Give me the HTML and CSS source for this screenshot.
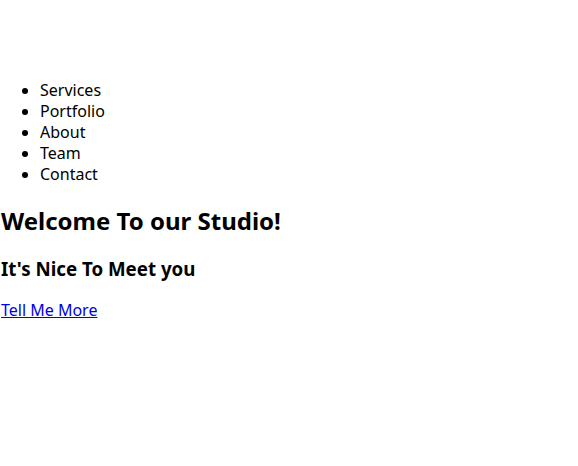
FILE: index.html
```html
<!DOCTYPE html>
<html lang="en">
<head>
<meta charset="utf-8">
<title>Studio</title>
<link rel="stylesheet" href="styles.css">
</head>
<body>
<nav class="nav">
  <ul class="nav-list">
    <li>Services</li>
    <li>Portfolio</li>
    <li>About</li>
    <li>Team</li>
    <li>Contact</li>
  </ul>
</nav>
<header class="hero">
  <h1 class="hero-title">Welcome To our Studio!</h1>
  <h3 class="hero-sub">It's Nice To Meet you</h3>
  <a class="hero-link" href="#">Tell Me More</a>
</header>
</body>
</html>
```

FILE: styles.css
```css
body {
  margin: 0;
  font-family: "Noto Sans", "Open Sans", sans-serif;
  font-size: 16px;
  line-height: 21px;
  color: #000;
  background: #fff;
}
.nav {
  padding-top: 64px;
}
.nav-list {
  margin: 16px 0;
  padding-left: 40px;
}
.hero {
  padding-left: 1px;
}
.hero-title {
  font-size: 24px;
  line-height: 32px;
  margin: 20px 0 19px;
}
.hero-sub {
  font-size: 18.72px;
  line-height: 25px;
  margin: 0 0 19px;
}
.hero-link {
  color: #0000ee;
}
```
